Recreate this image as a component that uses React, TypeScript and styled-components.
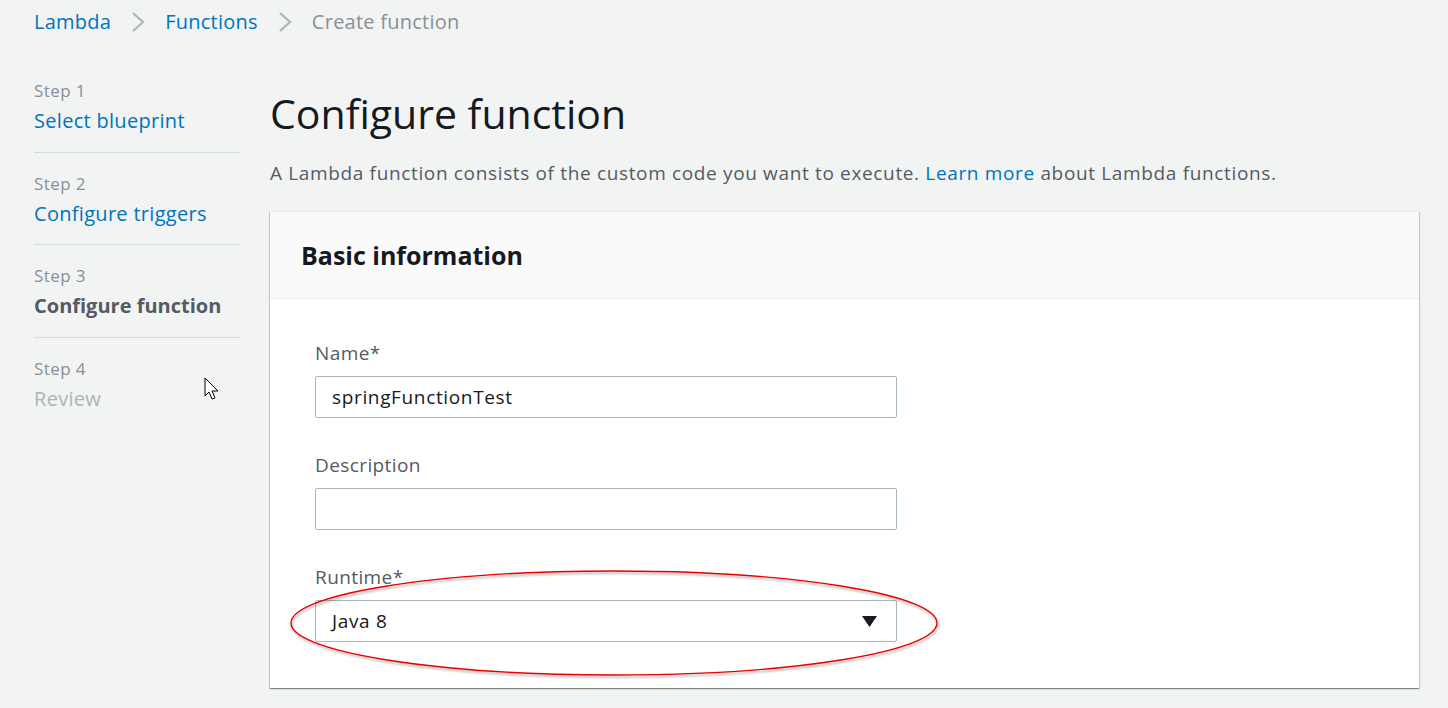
import React from "react";
import styled, { createGlobalStyle } from "styled-components";

const GlobalStyle = createGlobalStyle`
  html, body {
    margin: 0;
    padding: 0;
    background: #f2f3f3;
    font-family: "Open Sans", "Noto Sans", sans-serif;
    color: #16191f;
  }
  * { box-sizing: border-box; }
`;

const Page = styled.div`
  position: relative;
  width: 1448px;
  height: 708px;
  overflow: hidden;
  background: #f2f3f3;
`;

const Breadcrumbs = styled.nav`
  display: flex;
  align-items: center;
  height: 44px;
  padding: 0 34px;
  gap: 20px;
`;

const Crumb = styled.span<{ $current?: boolean }>`
  font-size: 20px;
  line-height: 26px;
  letter-spacing: 0.25px;
  color: ${(p) => (p.$current ? "#879196" : "#0073bb")};
`;

const Chevron = styled.svg`
  width: 14px;
  height: 22px;
  display: block;
`;

const Layout = styled.div`
  display: grid;
  grid-template-columns: 206px 1149px;
  column-gap: 30px;
  padding: 16px 0 0 34px;
`;

const StepNav = styled.ol`
  list-style: none;
  margin: 0;
  padding: 0;
`;

const StepItem = styled.li`
  padding: 21px 0 17px;
  border-bottom: 1px solid #d5dbdb;
  &:last-child {
    border-bottom: none;
  }
`;

const StepLabel = styled.div`
  font-size: 17px;
  line-height: 20px;
  letter-spacing: 0.4px;
  color: #879196;
`;

type StepState = "link" | "active" | "disabled";

const StepTitle = styled.div<{ $state: StepState }>`
  margin-top: 7px;
  font-size: 20px;
  line-height: 26.5px;
  letter-spacing: ${(p) => (p.$state === "active" ? "0" : "0.3px")};
  font-weight: ${(p) => (p.$state === "active" ? 700 : 400)};
  color: ${(p) =>
    p.$state === "active" ? "#545b64" : p.$state === "disabled" ? "#aab7b8" : "#0073bb"};
`;

const Main = styled.main``;

const Title = styled.h1`
  margin: 29px 0 0;
  font-size: 41px;
  line-height: 48px;
  font-weight: 400;
  color: #16191f;
`;

const Lead = styled.p`
  margin: 23px 0 0;
  font-size: 19px;
  line-height: 26px;
  letter-spacing: 0.65px;
  color: #545b64;
`;

const Link = styled.a`
  color: #0073bb;
  text-decoration: none;
`;

const Card = styled.section`
  margin-top: 25px;
  background: #fff;
  border-top: 1px solid #eaeded;
  box-shadow: 0 1px 1px 0 rgba(0, 28, 36, 0.3), 1px 1px 1px 0 rgba(0, 28, 36, 0.15),
    -1px 1px 1px 0 rgba(0, 28, 36, 0.15);
`;

const CardHeader = styled.header`
  display: flex;
  align-items: center;
  height: 87px;
  padding: 0 31px;
  background: #fafafa;
  border-bottom: 1px solid #eaeded;
`;

const CardTitle = styled.h2`
  margin: 0;
  font-size: 25px;
  line-height: 30px;
  font-weight: 700;
  color: #16191f;
`;

const CardBody = styled.div`
  display: flex;
  flex-direction: column;
  gap: 36px;
  padding: 43px 45px 46px;
`;

const Field = styled.div`
  display: flex;
  flex-direction: column;
  gap: 12px;
  width: 582px;
`;

const Label = styled.label`
  font-size: 19px;
  line-height: 22px;
  letter-spacing: 0.4px;
  color: #545b64;
`;

const Control = styled.div`
  display: flex;
  align-items: center;
  justify-content: space-between;
  height: 42px;
  padding: 0 19px 0 16px;
  border: 1px solid #aab7b8;
  border-radius: 2px;
  background: #fff;
  font-size: 19px;
  letter-spacing: 0.65px;
  color: #16191f;
`;

const Annotation = styled.svg`
  position: absolute;
  left: 284px;
  top: 564px;
  pointer-events: none;
`;

const Cursor = styled.svg`
  position: absolute;
  left: 204px;
  top: 377px;
`;

const ChevronIcon = () => (
  <Chevron viewBox="0 0 14 22">
    <path d="M2 2 L12 11 L2 20" fill="none" stroke="#aab7b8" strokeWidth="2.2" />
  </Chevron>
);

const steps: { n: number; title: string; state: StepState }[] = [
  { n: 1, title: "Select blueprint", state: "link" },
  { n: 2, title: "Configure triggers", state: "link" },
  { n: 3, title: "Configure function", state: "active" },
  { n: 4, title: "Review", state: "disabled" },
];

export default function App() {
  return (
    <Page>
      <GlobalStyle />
      <Breadcrumbs>
        <Crumb>Lambda</Crumb>
        <ChevronIcon />
        <Crumb>Functions</Crumb>
        <ChevronIcon />
        <Crumb $current>Create function</Crumb>
      </Breadcrumbs>
      <Layout>
        <StepNav>
          {steps.map((s) => (
            <StepItem key={s.n}>
              <StepLabel>Step {s.n}</StepLabel>
              <StepTitle $state={s.state}>{s.title}</StepTitle>
            </StepItem>
          ))}
        </StepNav>
        <Main>
          <Title>Configure function</Title>
          <Lead>
            A Lambda function consists of the custom code you want to execute.{" "}
            <Link>Learn more</Link> about Lambda functions.
          </Lead>
          <Card>
            <CardHeader>
              <CardTitle>Basic information</CardTitle>
            </CardHeader>
            <CardBody>
              <Field>
                <Label>Name*</Label>
                <Control>springFunctionTest</Control>
              </Field>
              <Field>
                <Label>Description</Label>
                <Control />
              </Field>
              <Field>
                <Label>Runtime*</Label>
                <Control>
                  <span>Java 8</span>
                  <svg width="15" height="11" viewBox="0 0 15 11">
                    <path d="M0 0 H15 L7.5 11 Z" fill="#16191f" />
                  </svg>
                </Control>
              </Field>
            </CardBody>
          </Card>
        </Main>
      </Layout>
      <Annotation width="660" height="120" viewBox="0 0 660 120">
        <defs>
          <filter id="sh" x="-5%" y="-20%" width="110%" height="140%">
            <feDropShadow dx="1" dy="2" stdDeviation="1.2" floodColor="#000" floodOpacity="0.35" />
          </filter>
        </defs>
        <ellipse cx="330" cy="59" rx="323" ry="52" fill="none" stroke="#e60000" strokeWidth="1.4" filter="url(#sh)" />
      </Annotation>
      <Cursor width="16" height="26" viewBox="0 0 16 26">
        <path
          d="M1 1 L1 19 L5 15 L8 22 L11 21 L8 14 L14 14 Z"
          fill="#fff"
          stroke="#000"
          strokeWidth="1"
          strokeLinejoin="miter"
        />
      </Cursor>
    </Page>
  );
}
